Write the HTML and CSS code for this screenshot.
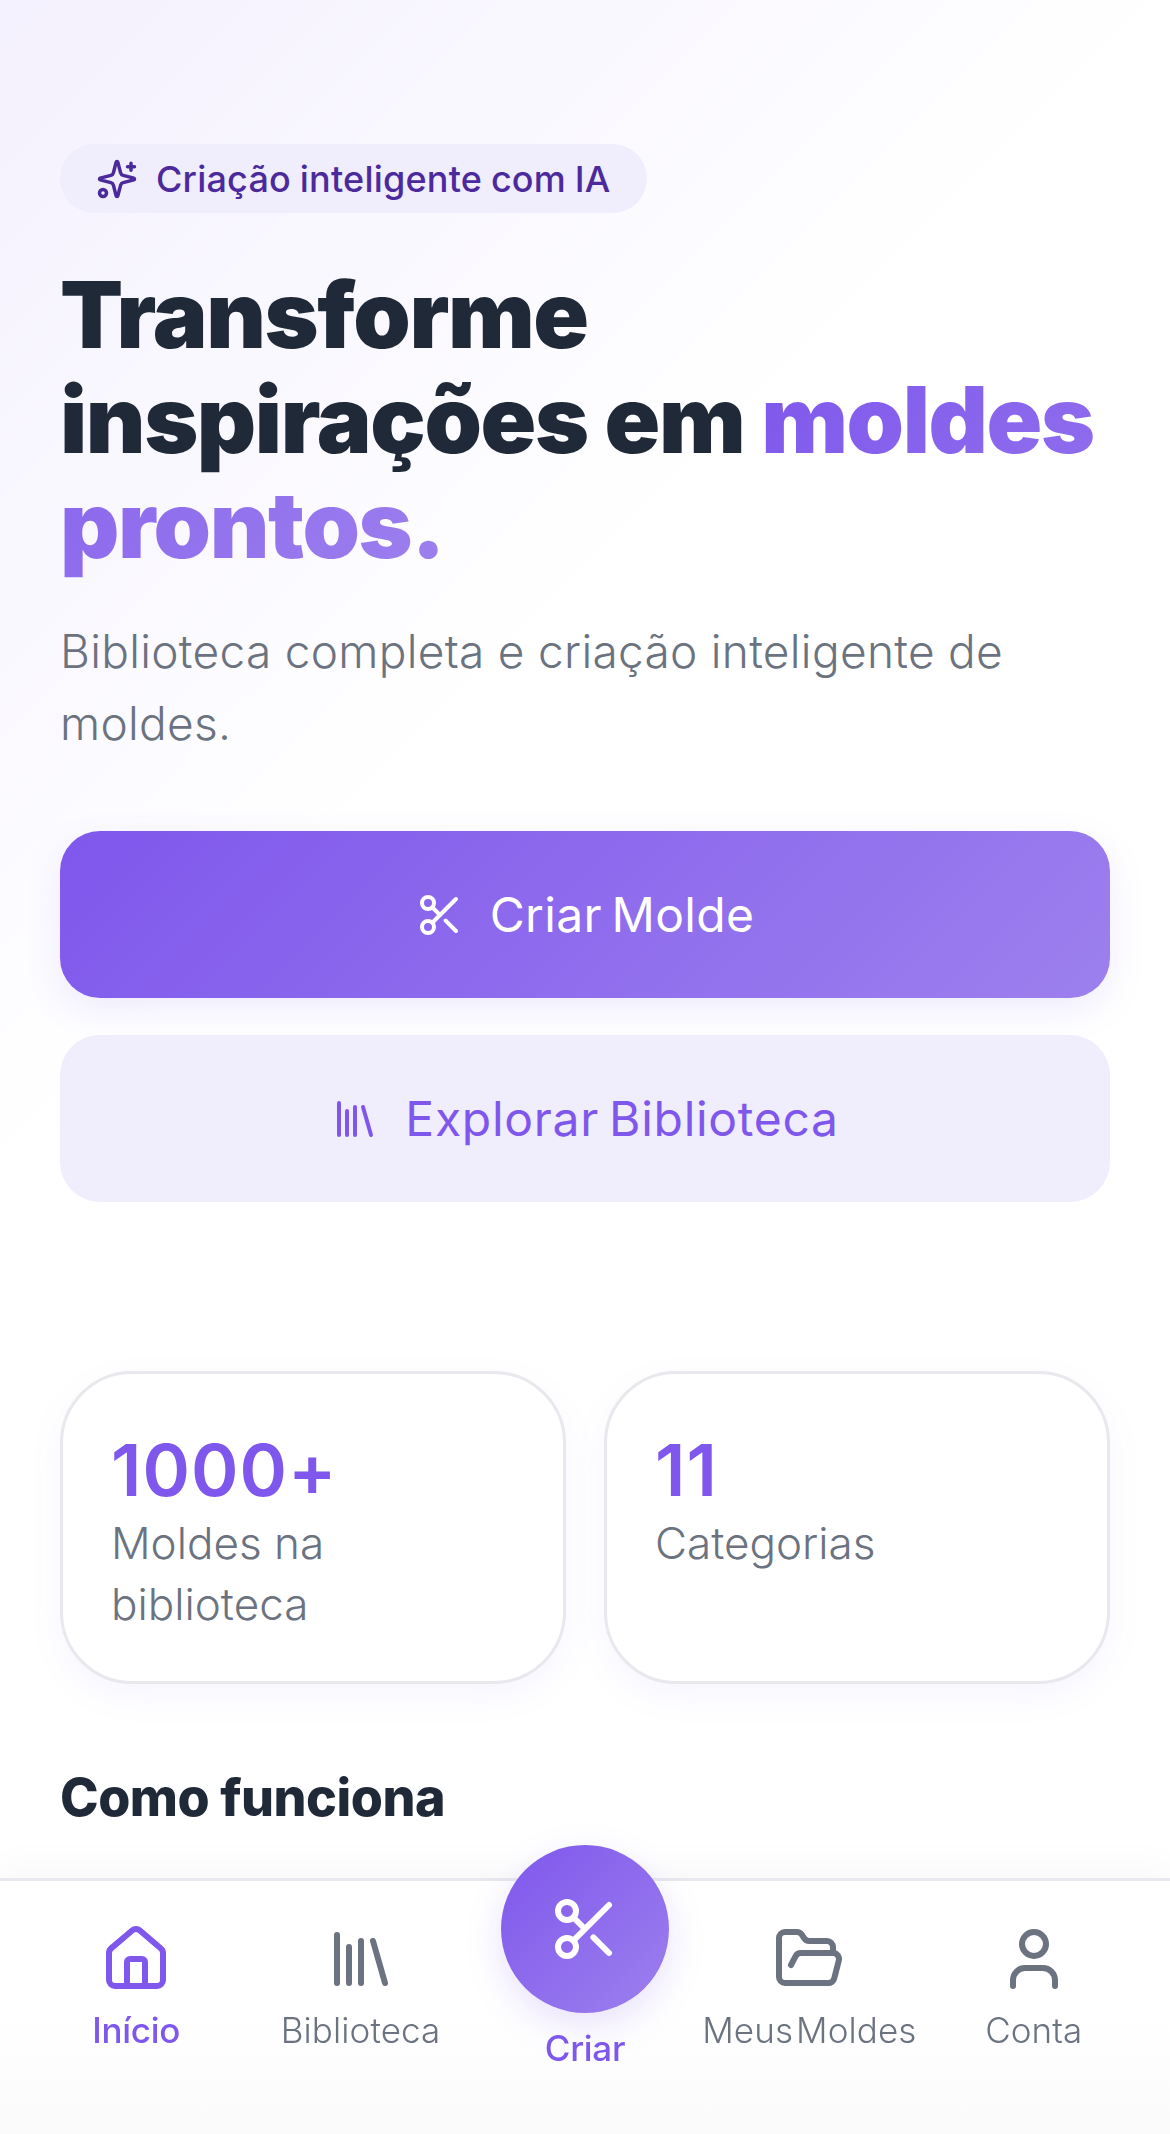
FILE: index.html
```html
<!DOCTYPE html>
<html lang="pt-BR">
<head>
  <meta charset="UTF-8">
  <meta name="viewport" content="width=device-width, initial-scale=1.0">
  <title>Moldes</title>
  <link rel="stylesheet" href="styles.css">
</head>
<body>
  <main class="page">
    <section class="hero">
      <div class="badge">
        <svg class="icon badge-icon" viewBox="0 0 24 24">
          <path d="M9.937 15.5A2 2 0 0 0 8.5 14.063l-6.135-1.582a.5.5 0 0 1 0-.962L8.5 9.936A2 2 0 0 0 9.937 8.5l1.582-6.135a.5.5 0 0 1 .963 0L14.063 8.5A2 2 0 0 0 15.5 9.937l6.135 1.581a.5.5 0 0 1 0 .964L15.5 14.063a2 2 0 0 0-1.437 1.437l-1.582 6.135a.5.5 0 0 1-.963 0z"/>
          <path d="M20 3v4M22 5h-4"/>
          <circle cx="4" cy="20" r="2"/>
        </svg>
        <span>Criação inteligente com IA</span>
      </div>
      <h1>Transforme inspirações em <span class="accent">moldes prontos.</span></h1>
      <p class="lead">Biblioteca completa e criação inteligente de moldes.</p>
      <a class="btn btn-primary" href="#">
        <svg class="icon btn-icon" viewBox="0 0 24 24">
          <circle cx="6" cy="6" r="3"/>
          <path d="M8.12 8.12 12 12M20 4 8.12 15.88"/>
          <circle cx="6" cy="18" r="3"/>
          <path d="M14.8 14.8 20 20"/>
        </svg>
        Criar Molde
      </a>
      <a class="btn btn-soft" href="#">
        <svg class="icon btn-icon" viewBox="0 0 24 24">
          <path d="m16 6 4 14M12 6v14M8 8v12M4 4v16"/>
        </svg>
        Explorar Biblioteca
      </a>
    </section>

    <section class="stats">
      <div class="stat-card">
        <div class="stat-num">1000+</div>
        <div class="stat-label">Moldes na biblioteca</div>
      </div>
      <div class="stat-card">
        <div class="stat-num">11</div>
        <div class="stat-label">Categorias</div>
      </div>
    </section>

    <h2 class="section-title">Como funciona</h2>
  </main>

  <nav class="tabbar">
    <a class="tab active" href="#">
      <svg class="icon tab-icon" viewBox="0 0 24 24">
        <path d="M15 21v-8a1 1 0 0 0-1-1h-4a1 1 0 0 0-1 1v8"/>
        <path d="M3 10a2 2 0 0 1 .709-1.528l7-5.999a2 2 0 0 1 2.582 0l7 5.999A2 2 0 0 1 21 10v9a2 2 0 0 1-2 2H5a2 2 0 0 1-2-2z"/>
      </svg>
      <span>Início</span>
    </a>
    <a class="tab" href="#">
      <svg class="icon tab-icon" viewBox="0 0 24 24">
        <path d="m16 6 4 14M12 6v14M8 8v12M4 4v16"/>
      </svg>
      <span>Biblioteca</span>
    </a>
    <a class="tab tab-create active" href="#">
      <div class="fab">
        <svg class="icon tab-icon" viewBox="0 0 24 24">
          <circle cx="6" cy="6" r="3"/>
          <path d="M8.12 8.12 12 12M20 4 8.12 15.88"/>
          <circle cx="6" cy="18" r="3"/>
          <path d="M14.8 14.8 20 20"/>
        </svg>
      </div>
      <span>Criar</span>
    </a>
    <a class="tab" href="#">
      <svg class="icon tab-icon" viewBox="0 0 24 24">
        <path d="m6 14 1.5-2.9A2 2 0 0 1 9.24 10H20a2 2 0 0 1 1.94 2.5l-1.54 6a2 2 0 0 1-1.95 1.5H4a2 2 0 0 1-2-2V5a2 2 0 0 1 2-2h3.9a2 2 0 0 1 1.69.9l.81 1.2a2 2 0 0 0 1.67.9H18a2 2 0 0 1 2 2v2"/>
      </svg>
      <span>Meus Moldes</span>
    </a>
    <a class="tab" href="#">
      <svg class="icon tab-icon" viewBox="0 0 24 24">
        <path d="M19 21v-2a4 4 0 0 0-4-4H9a4 4 0 0 0-4 4v2"/>
        <circle cx="12" cy="7" r="4"/>
      </svg>
      <span>Conta</span>
    </a>
  </nav>
</body>
</html>
```

FILE: styles.css
```css
* {
  box-sizing: border-box;
}

html,
body {
  margin: 0;
  height: 100%;
  overflow: hidden;
}

body {
  font-family: "Inter", "Liberation Sans", sans-serif;
  color: #1f2937;
  background: linear-gradient(135deg, #f4f1fe 0%, #faf8ff 20%, #ffffff 36%);
}

a {
  text-decoration: none;
}

.icon {
  fill: none;
  stroke: currentColor;
  stroke-width: 2;
  stroke-linecap: round;
  stroke-linejoin: round;
  flex-shrink: 0;
}

.page {
  padding: 144px 60px 0;
}

.badge {
  display: inline-flex;
  align-items: center;
  gap: 18px;
  height: 69px;
  width: 587px;
  padding: 0 36px;
  border-radius: 35px;
  background: #f0edfc;
  color: #4c2a9c;
  font-size: 36px;
  font-weight: 500;
  letter-spacing: 0.2px;
  word-spacing: -1px;
}

.badge-icon {
  width: 42px;
  height: 42px;
}

h1 {
  margin: 49px 0 0;
  font-size: 92px;
  font-weight: 900;
  line-height: 105px;
  letter-spacing: -1.4px;
  color: #1f2937;
}

.accent {
  background: linear-gradient(135deg, #7f57ec 0%, #9d80ee 100%);
  -webkit-background-clip: text;
  background-clip: text;
  color: transparent;
}

.lead {
  margin: 38px 0 0;
  font-size: 46px;
  line-height: 72px;
  font-weight: 300;
  letter-spacing: 0.3px;
  color: #6b7280;
}

.btn {
  display: flex;
  align-items: center;
  justify-content: center;
  gap: 26px;
  height: 167px;
  border-radius: 40px;
  font-size: 48px;
  font-weight: 400;
  letter-spacing: 0.3px;
  word-spacing: -4px;
}

.btn-icon {
  width: 48px;
  height: 48px;
}

.btn-primary {
  margin-top: 72px;
  color: #fff;
  background: linear-gradient(135deg, #7f57ec 0%, #9d80ee 100%);
  box-shadow: 0 12px 36px rgba(127, 87, 236, 0.12);
}

.btn-soft {
  margin-top: 37px;
  color: #7f57ec;
  background: #f0edfc;
  letter-spacing: 0.7px;
}

.stats {
  display: grid;
  grid-template-columns: 1fr 1fr;
  gap: 38px;
  margin-top: 169px;
}

.stat-card {
  height: 313px;
  padding: 53px 48px 0;
  border: 3px solid #e8e8ee;
  border-radius: 72px;
  background: #fff;
  box-shadow: 0 12px 36px rgba(127, 87, 236, 0.06);
}

.stat-num {
  font-size: 72px;
  font-weight: 600;
  line-height: 86px;
  letter-spacing: 1px;
  color: #7f57ec;
}

.stat-label {
  font-size: 44px;
  font-weight: 300;
  line-height: 61px;
  color: #6b7280;
}

.section-title {
  margin: 84px 0 0;
  font-size: 52px;
  font-weight: 800;
  line-height: 60px;
  letter-spacing: -0.5px;
  color: #1f2937;
}

.tabbar {
  position: fixed;
  left: 0;
  right: 0;
  bottom: 0;
  height: 256px;
  display: grid;
  grid-template-columns: repeat(5, 1fr);
  align-items: start;
  padding: 42px 24px 0;
  border-top: 3px solid #e8e8ee;
  background: linear-gradient(#ffffff 50%, #fbfbfc 100%);
  box-shadow: 0 -12px 36px rgba(0, 0, 0, 0.03);
}

.tab {
  display: flex;
  flex-direction: column;
  align-items: center;
  gap: 13px;
  color: #6b7280;
  font-size: 35px;
  font-weight: 300;
  line-height: 45px;
  letter-spacing: 0.1px;
  word-spacing: -7px;
  white-space: nowrap;
}

.tab-icon {
  width: 72px;
  height: 72px;
}

.tab.active {
  color: #7f57ec;
  font-weight: 500;
  letter-spacing: -0.3px;
}

.tab-create {
  margin-top: -78px;
}

.fab {
  display: flex;
  align-items: center;
  justify-content: center;
  width: 168px;
  height: 168px;
  border-radius: 50%;
  color: #fff;
  background: linear-gradient(135deg, #7f57ec 0%, #9d80ee 100%);
  box-shadow: 0 12px 36px rgba(127, 87, 236, 0.18);
}
```
